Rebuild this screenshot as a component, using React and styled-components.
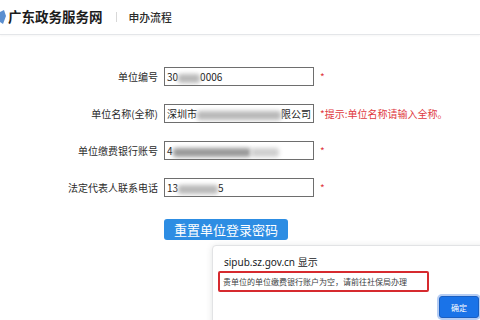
import { Fragment } from 'react';
import styled, { createGlobalStyle } from 'styled-components';

const GlobalStyle = createGlobalStyle`
  html, body {
    margin: 0;
    padding: 0;
    background: #fff;
  }
  body {
    width: 480px;
    height: 320px;
    overflow: hidden;
    font-family: "Noto Sans CJK SC", "Noto Sans", sans-serif;
  }
`;

const Page = styled.div`
  position: relative;
  width: 480px;
  height: 320px;
  overflow: hidden;
  background: #fff;
`;

const Header = styled.header`
  display: flex;
  align-items: center;
  height: 34px;
  border-bottom: 1px solid #e4e6e9;
  box-shadow: 0 1px 2px rgba(0, 0, 0, 0.04);
`;

const Logo = styled.svg`
  width: 6px;
  height: 14px;
  margin-right: 2px;
  flex: none;
`;

const SiteTitle = styled.h1`
  margin: 0;
  font-size: 13.5px;
  font-weight: 700;
  line-height: 1;
  color: #1c1c1c;
`;

const Divider = styled.span`
  width: 1px;
  height: 10px;
  background: #d8d8d8;
  margin: 0 12px 0 13px;
`;

const SubTitle = styled.span`
  font-size: 10.8px;
  font-weight: 500;
  line-height: 1;
  color: #2a2a2a;
`;

const Form = styled.div`
  display: grid;
  grid-template-columns: 158px 150px 1fr;
  column-gap: 6px;
  row-gap: 18px;
  padding-top: 32px;
  align-items: center;
`;

const Label = styled.label`
  justify-self: end;
  font-size: 10px;
  line-height: 19px;
  color: #2b2b2b;
  white-space: nowrap;
`;

const Input = styled.div`
  box-sizing: border-box;
  height: 19px;
  border: 1px solid #6e6e6e;
  padding: 0 2px;
  font-size: 10px;
  line-height: 17px;
  color: #1e1e1e;
  white-space: nowrap;
  overflow: hidden;
`;

const Blur = styled.span`
  display: inline-block;
  filter: blur(2.2px);
  width: ${(p) => p.$w}px;
  height: 9px;
  vertical-align: middle;
  background: ${(p) => p.$tone || '#b9b9b9'};
  border-radius: 3px;
`;

const Note = styled.span`
  font-size: 10px;
  line-height: 19px;
  color: #e0393e;
  white-space: nowrap;
`;

const ResetButton = styled.button`
  grid-column: 2;
  justify-self: start;
  margin-top: 4px;
  width: 124px;
  height: 21px;
  border: none;
  border-radius: 3px;
  background: #2d8de3;
  color: #fff;
  font-family: inherit;
  font-size: 13px;
  line-height: 21px;
  padding: 0;
`;

const Dialog = styled.div`
  position: absolute;
  left: 212px;
  top: 245px;
  width: 300px;
  height: 100px;
  background: #fff;
  border: 1px solid #e2e3e5;
  border-radius: 4px;
  box-shadow: 0 1px 6px rgba(60, 64, 67, 0.15);
  padding: 9px 0 0 5px;
  box-sizing: border-box;
  display: flex;
  flex-direction: column;
`;

const DialogTitle = styled.div`
  padding-left: 6px;
  font-family: "Noto Sans", "Noto Sans CJK SC", sans-serif;
  font-size: 10px;
  line-height: 14px;
  color: #202124;
`;

const Message = styled.div`
  box-sizing: border-box;
  width: 211px;
  height: 21px;
  margin-top: 2px;
  border: 2px solid #d62a2f;
  border-radius: 2px;
  padding-left: 3px;
  font-size: 8px;
  line-height: 17px;
  color: #3c4043;
  white-space: nowrap;
`;

const ButtonRow = styled.div`
  display: flex;
  margin-top: 4px;
  padding-left: 221px;
`;

const OkButton = styled.button`
  width: 40px;
  height: 22px;
  border: 1px solid #1a5fc2;
  border-radius: 3px;
  box-shadow: 0 0 0 2px #b6cdf3;
  background: #1a73e8;
  color: #fff;
  font-family: inherit;
  font-size: 8px;
  padding: 0;
`;

const fields = [
  {
    label: '单位编号',
    value: (
      <>
        30<Blur $w={22} />0006
      </>
    ),
    note: '*',
  },
  {
    label: '单位名称(全称)',
    value: (
      <>
        深圳市<Blur $w={84} />限公司
      </>
    ),
    note: '*提示:单位名称请输入全称。',
  },
  {
    label: '单位缴费银行账号',
    value: (
      <>
        4<Blur $w={78} $tone="#9a9a9a" />
        <Blur $w={28} $tone="#cfcfcf" />
      </>
    ),
    note: '*',
  },
  {
    label: '法定代表人联系电话',
    value: (
      <>
        13<Blur $w={40} />5
      </>
    ),
    note: '*',
  },
];

export default function App() {
  return (
    <Page>
      <GlobalStyle />
      <Header>
        <Logo viewBox="0 0 6 14">
          <path d="M0 2 L4 0 L6 6 L3 14 L0 12 Z" fill="#5b8fd0" />
        </Logo>
        <SiteTitle>广东政务服务网</SiteTitle>
        <Divider />
        <SubTitle>申办流程</SubTitle>
      </Header>
      <Form>
        {fields.map((f) => (
          <Fragment key={f.label}>
            <Label>{f.label}</Label>
            <Input>{f.value}</Input>
            <Note>{f.note}</Note>
          </Fragment>
        ))}
        <ResetButton>重置单位登录密码</ResetButton>
      </Form>
      <Dialog>
        <DialogTitle>sipub.sz.gov.cn 显示</DialogTitle>
        <Message>贵单位的单位缴费银行账户为空，请前往社保局办理</Message>
        <ButtonRow>
          <OkButton>确定</OkButton>
        </ButtonRow>
      </Dialog>
    </Page>
  );
}
